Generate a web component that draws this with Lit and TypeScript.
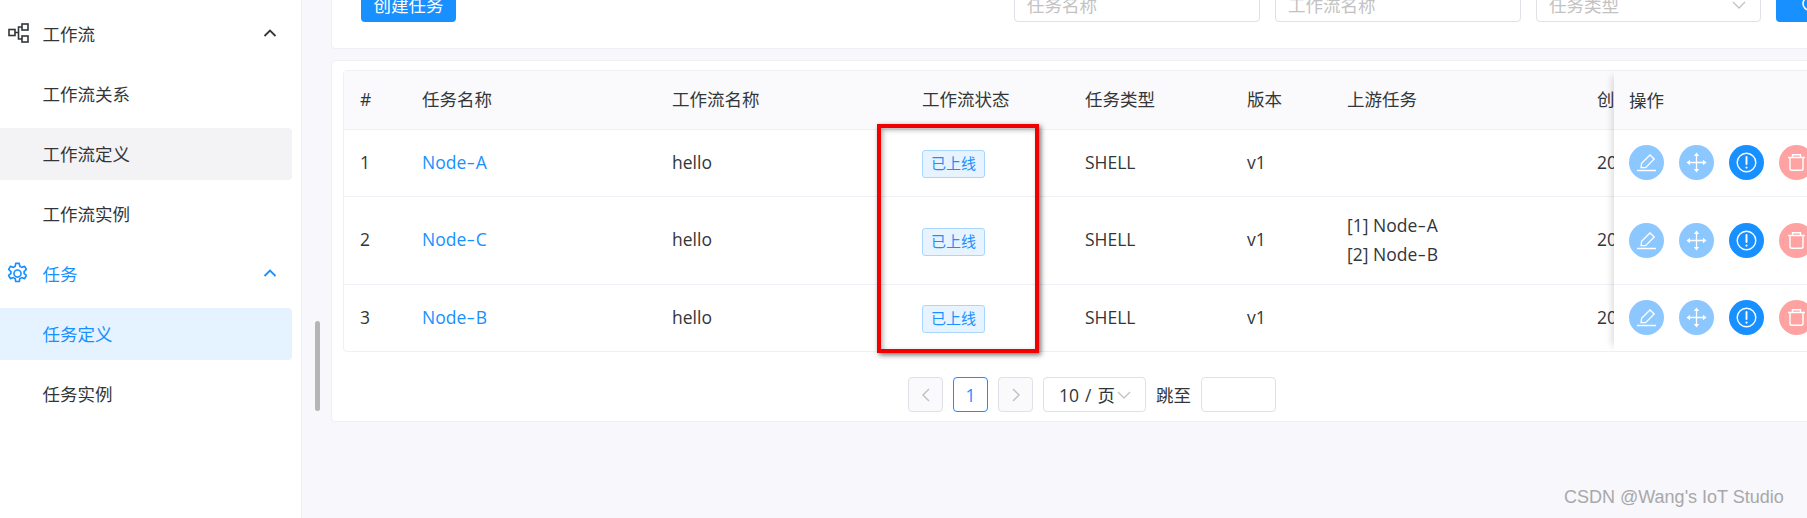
import { LitElement, html, css, svg } from "lit";
import { customElement } from "lit/decorators.js";

const chevUp = svg`<svg class="chev" viewBox="0 0 14 10" width="14" height="10"><path d="M1.5 8 L7 2.5 L12.5 8" fill="none" stroke="currentColor" stroke-width="1.8"/></svg>`;
const flowIcon = svg`<svg viewBox="0 0 21 20" width="21" height="20" fill="none" stroke="currentColor" stroke-width="1.6"><rect x="1" y="6.5" width="6" height="6"/><rect x="14" y="1" width="6" height="6"/><rect x="14" y="13" width="6" height="6"/><path d="M7 9.5 H10.5 M14 4 H10.5 V16 H14"/></svg>`;
const gearIcon = svg`<svg viewBox="0 0 24 24" width="25" height="25" fill="none" stroke="currentColor" stroke-width="1.6" stroke-linejoin="round"><path d="M10.3 2.3 h3.4 l.6 2.9 c.6.2 1.2.5 1.7.9 l2.8-1 1.7 3 -2.2 2 c.1.6.1 1.2 0 1.8 l2.2 2 -1.7 3 -2.8-1 c-.5.4-1.1.7-1.7.9 l-.6 2.9 h-3.4 l-.6-2.9 c-.6-.2-1.2-.5-1.7-.9 l-2.8 1 -1.7-3 2.2-2 c-.1-.6-.1-1.2 0-1.8 l-2.2-2 1.7-3 2.8 1 c.5-.4 1.1-.7 1.7-.9 z"/><circle cx="12" cy="12" r="3.4"/></svg>`;
const editIcon = svg`<svg viewBox="0 0 35 35" width="35" height="35" fill="none" stroke="#fff" stroke-width="1.3"><path d="M12 22.6 L12.6 18.2 L21 10 L25.2 14 L16.6 22.6 Z"/><path d="M8 25.5 H27" stroke-width="1.5"/></svg>`;
const moveIcon = svg`<svg viewBox="0 0 35 35" width="35" height="35"><path d="M17.5 10 V25 M10 17.5 H25" stroke="#fff" stroke-width="1.3"/><path d="M17.5 7.5 L20.2 11 H14.8 Z M17.5 27.5 L20.2 24 H14.8 Z M7.5 17.5 L11 14.8 V20.2 Z M27.5 17.5 L24 14.8 V20.2 Z" fill="#fff"/></svg>`;
const infoIcon = svg`<svg viewBox="0 0 35 35" width="35" height="35" fill="none" stroke="#fff"><circle cx="17.5" cy="17.5" r="9.3" stroke-width="1.4"/><path d="M17.5 12 V19" stroke-width="1.9" stroke-linecap="round"/><circle cx="17.5" cy="22.6" r="1.1" fill="#fff" stroke="none"/></svg>`;
const trashIcon = svg`<svg viewBox="0 0 35 35" width="35" height="35" fill="none" stroke="#fff" stroke-width="1.4"><path d="M9 12.5 H26 M13.5 12.5 V9.8 H21.5 V12.5"/><path d="M11 12.5 V23.5 Q11 25.3 12.8 25.3 H22.2 Q24 25.3 24 23.5 V12.5"/></svg>`;
const chevDown = svg`<svg viewBox="0 0 16 10" width="16" height="10" fill="none" stroke="#c2c2c2" stroke-width="1.3"><path d="M2 2 L8 8 L14 2"/></svg>`;
const searchIcon = svg`<svg viewBox="0 0 20 20" width="20" height="20" fill="none" stroke="#fff" stroke-width="1.6"><circle cx="8.5" cy="8.5" r="6.5"/><path d="M13.5 13.5 L18 18"/></svg>`;

const rows = [
  { n: 1, name: "Node-A", up: [] as string[], cls: "r1" },
  { n: 2, name: "Node-C", up: ["[1] Node-A", "[2] Node-B"], cls: "r2" },
  { n: 3, name: "Node-B", up: [] as string[], cls: "r3" },
];

const hyphened = (s: string) => {
  const [a, b] = s.split("-");
  return html`${a}<span class="hy">-</span>${b}`;
};

@customElement("app-root")
export class AppRoot extends LitElement {
  static styles = css`
    :host {
      display: flex;
      width: 1807px;
      height: 518px;
      overflow: hidden;
      position: relative;
      background: #f7f7fc;
      color: #333639;
      font-family: "Open Sans", "Noto Sans CJK SC", sans-serif;
      font-size: 17.5px;
    }
    .side {
      flex: 0 0 302px;
      box-sizing: border-box;
      background: #fff;
      border-right: 1px solid #efeff5;
      padding: 8px 9px 0 0;
      display: flex;
      flex-direction: column;
      gap: 8px;
    }
    .item {
      height: 52px;
      box-sizing: border-box;
      display: flex;
      align-items: center;
      padding: 0 0 2px 42.5px;
      border-radius: 0 4px 4px 0;
      position: relative;
    }
    .item.group { padding-left: 0; }
    .item.hover { background: #f3f3f5; }
    .item.active { background: #e5f2ff; color: #1890ff; }
    .item.blue { color: #1890ff; }
    .ico { flex: 0 0 42.5px; display: flex; padding-left: 8px; box-sizing: border-box; }
    .ico.gear { padding-left: 5px; }
    .chev { margin-left: auto; margin-right: 15px; }
    .scrollbar {
      position: absolute;
      left: 315px;
      top: 321px;
      width: 5px;
      height: 90px;
      border-radius: 3px;
      background: #b5b5b5;
    }
    .main {
      flex: 0 0 1545px;
      margin-left: 29px;
      display: flex;
      flex-direction: column;
      gap: 11px;
    }
    .card {
      background: #fff;
      border: 1px solid #efeff5;
      border-radius: 4px;
    }
    .top {
      margin-top: -40px;
      padding: 26px 29px 26px 29px;
      display: flex;
      gap: 15px;
    }
    .btn {
      height: 35px;
      box-sizing: border-box;
      border-radius: 4px;
      background: #1890ff;
      color: #fff;
      display: flex;
      align-items: center;
      justify-content: center;
    }
    .create { width: 95px; margin-right: auto; }
    .search { width: 70px; }
    .input {
      height: 35px;
      box-sizing: border-box;
      border: 1px solid #e0e0e6;
      border-radius: 4px;
      color: #c2c2c2;
      padding-left: 12px;
      display: flex;
      align-items: center;
      justify-content: space-between;
    }
    .w246 { width: 246px; }
    .w225 { width: 225px; padding-right: 13px; }
    .tablecard { padding: 9px 0 9px 11px; }
    .table {
      display: flex;
      border: 1px solid #efeff5;
      border-radius: 4px 0 0 4px;
      width: 1520px;
    }
    .scroll { flex: 0 0 1270px; overflow: hidden; }
    .row {
      display: grid;
      grid-template-columns: 62px 250px 250px 163px 162px 100px 250px 250px;
      border-bottom: 1px solid #efeff5;
      box-sizing: border-box;
      width: 1487px;
    }
    .cell {
      padding: 0 0 2px 16px;
      display: flex;
      flex-direction: column;
      justify-content: center;
      white-space: nowrap;
      line-height: 28.5px;
      align-items: flex-start;
    }
    .head { height: 59px; background: #fafafc; }
    .fixed .row { width: auto; display: flex; align-items: center; gap: 15px; padding-left: 15px; padding-bottom: 1px; }
    .r1 { height: 67px; }
    .r2 { height: 88px; }
    .r3 { height: 66px; border-bottom: 0 !important; }
    .fixed {
      flex: 1;
      background: #fff;
      box-shadow: -7px 0 7px -5px rgba(0, 0, 0, 0.14);
      position: relative;
      z-index: 1;
    }
    .fixed .row.head { background: #fafafc; padding-bottom: 2px; }
    .link { color: #1890ff; }
    .hy {
      display: inline-block;
      width: 9.6px;
      text-align: center;
      transform: scaleX(1.5);
    }
    .tag {
      width: 63px;
      height: 28px;
      margin-top: 4px;
      box-sizing: border-box;
      border: 1px solid #a9d6ff;
      border-radius: 3px;
      background: #e7f3ff;
      color: #1890ff;
      font-size: 15px;
      line-height: 25px;
      text-align: center;
    }
    .round {
      flex: 0 0 35px;
      height: 35px;
      border-radius: 50%;
      display: block;
    }
    .round svg { display: block; }
    .l { background: #8cc7ff; }
    .b { background: #1890ff; }
    .p { background: #ffa2a2; }
    .pager {
      margin: 25px 0 0 565px;
      display: flex;
      align-items: center;
      gap: 10px;
      height: 35px;
    }
    .pg {
      width: 35px;
      height: 35px;
      box-sizing: border-box;
      border: 1px solid #e0e0e6;
      border-radius: 4px;
      display: flex;
      align-items: center;
      justify-content: center;
    }
    .pg.dis { background: #fafafc; }
    .pg.cur { border-color: #1890ff; color: #1890ff; }
    .size {
      width: 103px;
      height: 35px;
      box-sizing: border-box;
      border: 1px solid #e0e0e6;
      border-radius: 4px;
      display: flex;
      align-items: center;
      gap: 1px;
      padding-left: 15px;
      white-space: nowrap;
      word-spacing: 1.5px;
    }
    .jumpin {
      width: 75px;
      height: 35px;
      box-sizing: border-box;
      border: 1px solid #e0e0e6;
      border-radius: 4px;
    }
    .mark {
      position: absolute;
      left: 877px;
      top: 124px;
      width: 162px;
      height: 229px;
      box-sizing: border-box;
      border: 4px solid #f00000;
      box-shadow: 2px 2px 5px rgba(0, 0, 0, 0.55), inset 2px 2px 5px rgba(0, 0, 0, 0.3);
      z-index: 2;
    }
    .wm {
      position: absolute;
      left: 1564px;
      top: 487px;
      font-family: "Liberation Sans", sans-serif;
      font-size: 18px;
      line-height: 20px;
      color: #a8a8a8;
      z-index: 2;
    }
  `;

  render() {
    return html`
      <nav class="side">
        <div class="item group"><span class="ico">${flowIcon}</span>工作流${chevUp}</div>
        <div class="item">工作流关系</div>
        <div class="item hover">工作流定义</div>
        <div class="item">工作流实例</div>
        <div class="item group blue"><span class="ico gear">${gearIcon}</span>任务${chevUp}</div>
        <div class="item active">任务定义</div>
        <div class="item">任务实例</div>
      </nav>
      <div class="scrollbar"></div>
      <main class="main">
        <section class="card top">
          <div class="btn create">创建任务</div>
          <div class="input w246">任务名称</div>
          <div class="input w246">工作流名称</div>
          <div class="input w225">任务类型${chevDown}</div>
          <div class="btn search">${searchIcon}</div>
        </section>
        <section class="card tablecard">
          <div class="table">
            <div class="scroll">
              <div class="row head">
                <div class="cell">#</div>
                <div class="cell">任务名称</div>
                <div class="cell">工作流名称</div>
                <div class="cell">工作流状态</div>
                <div class="cell">任务类型</div>
                <div class="cell">版本</div>
                <div class="cell">上游任务</div>
                <div class="cell">创建时间</div>
              </div>
              ${rows.map(
                (r) => html`<div class="row ${r.cls}">
                  <div class="cell">${r.n}</div>
                  <div class="cell link"><span>${hyphened(r.name)}</span></div>
                  <div class="cell">hello</div>
                  <div class="cell"><span class="tag">已上线</span></div>
                  <div class="cell">SHELL</div>
                  <div class="cell">v1</div>
                  <div class="cell">${r.up.map((u) => html`<span>${hyphened(u)}</span>`)}</div>
                  <div class="cell">2022-10-09 14:20:11</div>
                </div>`
              )}
            </div>
            <div class="fixed">
              <div class="row head">操作</div>
              ${rows.map(
                (r) => html`<div class="row ${r.cls}">
                  <span class="round l">${editIcon}</span>
                  <span class="round l">${moveIcon}</span>
                  <span class="round b">${infoIcon}</span>
                  <span class="round p">${trashIcon}</span>
                </div>`
              )}
            </div>
          </div>
          <div class="pager">
            <div class="pg dis"><svg viewBox="0 0 10 16" width="10" height="16" fill="none" stroke="#c2c2c2" stroke-width="1.5"><path d="M8 2 L2 8 L8 14"/></svg></div>
            <div class="pg cur">1</div>
            <div class="pg dis"><svg viewBox="0 0 10 16" width="10" height="16" fill="none" stroke="#c2c2c2" stroke-width="1.5"><path d="M2 2 L8 8 L2 14"/></svg></div>
            <div class="size">10 / 页${chevDown}</div>
            <span>跳至</span>
            <div class="jumpin"></div>
          </div>
        </section>
      </main>
      <div class="mark"></div>
      <div class="wm">CSDN @Wang's IoT Studio</div>
    `;
  }
}
